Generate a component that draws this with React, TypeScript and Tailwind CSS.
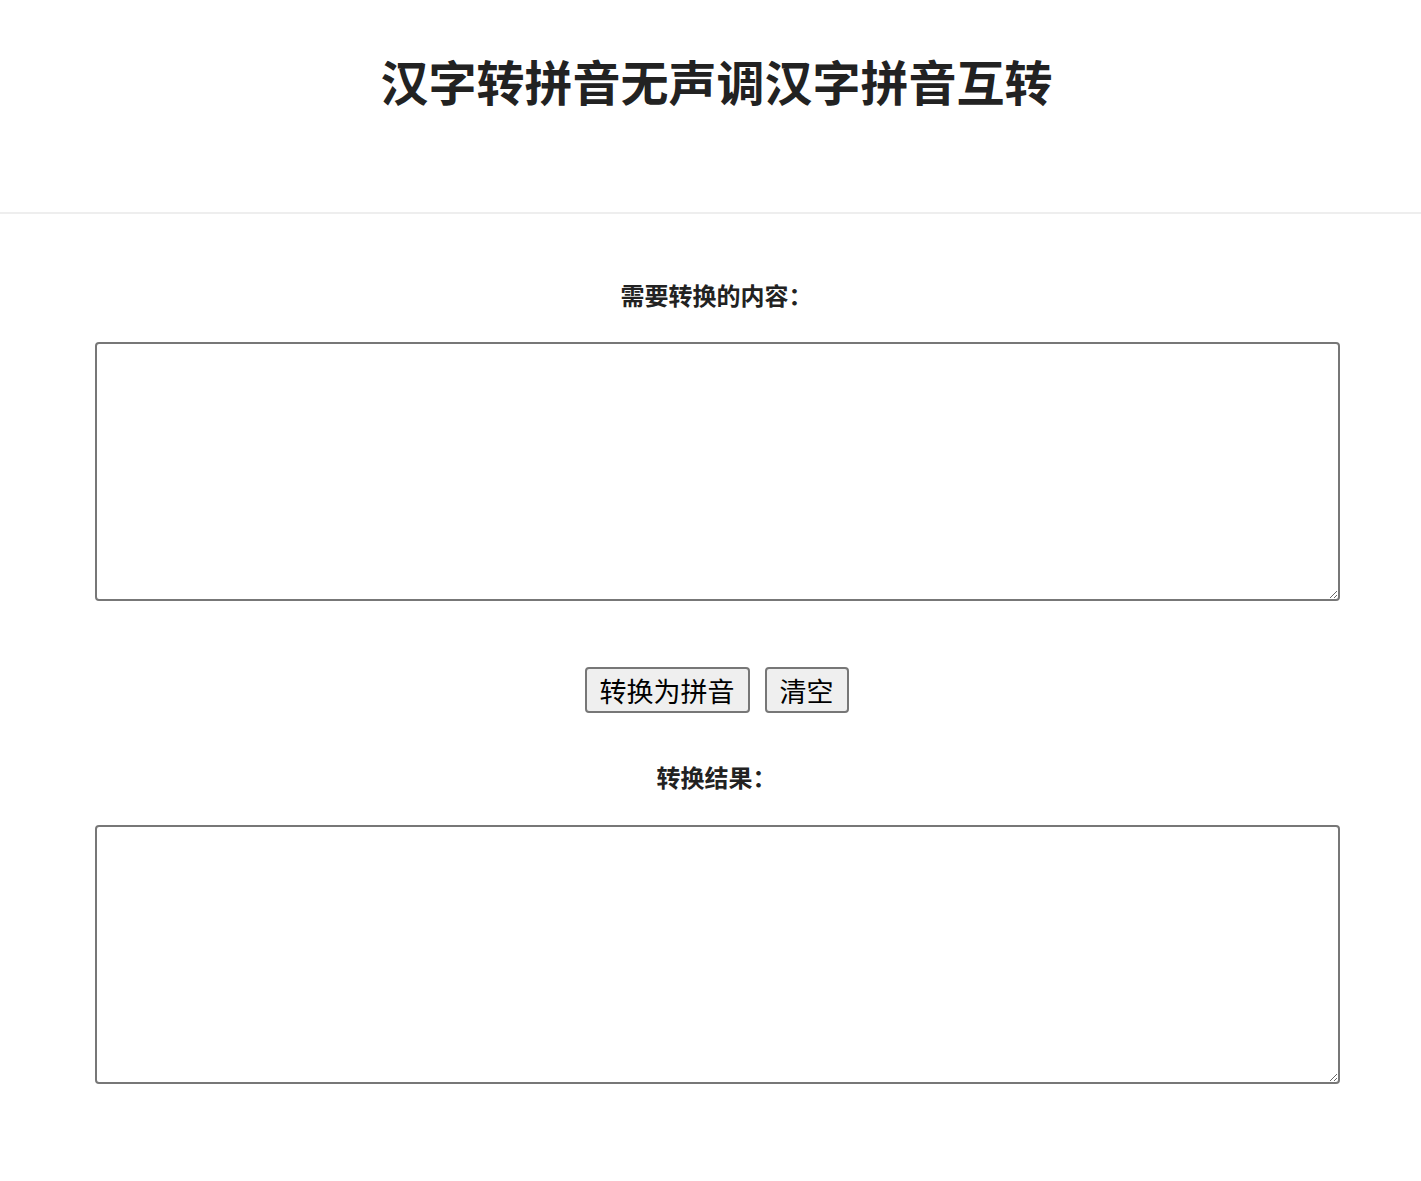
import React, { useState } from 'react';

const font = { fontFamily: '"Noto Sans CJK SC", "Noto Sans", sans-serif' };

export default function App() {
  const [input, setInput] = useState('');
  const [output, setOutput] = useState('');

  return (
    <div className="min-h-[1181px] bg-white text-[#222]" style={font}>
      <header className="h-[214px] border-b-2 border-[#eeeeee] pl-[12px] pt-[56px]">
        <h1 className="text-center text-[48px] font-bold leading-[48px]">汉字转拼音无声调汉字拼音互转</h1>
      </header>

      <main className="flex flex-col">
        <label className="mt-[66px] text-center text-[24px] font-bold leading-[30px]">
          需要转换的内容<span className="mr-[-12px]">：</span>
        </label>
        <textarea
          value={input}
          onChange={(e) => setInput(e.target.value)}
          className="ml-[95px] mt-[32px] h-[259px] w-[1245px] rounded-[4px] border-2 border-[#777777] bg-white p-1 outline-none"
        />

        <div className="ml-[12px] mt-[66px] flex justify-center gap-[15px]">
          <button
            onClick={() => setOutput(input)}
            className="h-[46px] rounded-[4px] border-2 border-[#777777] bg-[#efefef] px-[13px] text-[27px] leading-none text-black"
          >
            转换为拼音
          </button>
          <button
            onClick={() => {
              setInput('');
              setOutput('');
            }}
            className="h-[46px] rounded-[4px] border-2 border-[#777777] bg-[#efefef] px-[13px] text-[27px] leading-none text-black"
          >
            清空
          </button>
        </div>

        <label className="mt-[49px] text-center text-[24px] font-bold leading-[30px]">
          转换结果<span className="mr-[-12px]">：</span>
        </label>
        <textarea
          value={output}
          readOnly
          className="ml-[95px] mt-[33px] h-[259px] w-[1245px] rounded-[4px] border-2 border-[#777777] bg-white p-1 outline-none"
        />
      </main>
    </div>
  );
}
